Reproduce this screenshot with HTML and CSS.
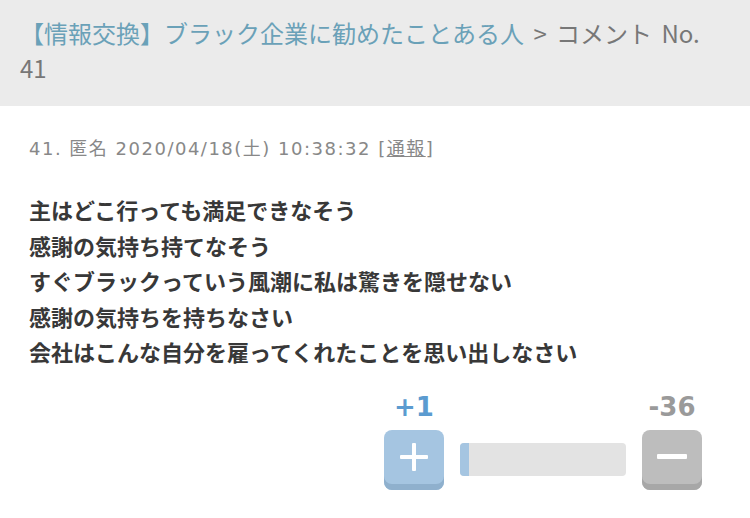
FILE: index.html
```html
<!DOCTYPE html>
<html lang="ja">
<head>
<meta charset="utf-8">
<title>コメント No. 41</title>
<link rel="stylesheet" href="styles.css">
</head>
<body>
<header class="crumb">
  <a class="crumb-link" href="#">【情報交換】ブラック企業に勧めたことある人</a><span class="crumb-rest"> &gt; コメント No. 41</span>
</header>
<main class="comment">
  <div class="meta">41. 匿名 2020/04/18(土) 10:38:32 [<a class="report" href="#">通報</a>]</div>
  <div class="body">
    主はどこ行っても満足できなそう<br>
    感謝の気持ち持てなそう<br>
    すぐブラックっていう風潮に私は驚きを隠せない<br>
    感謝の気持ちを持ちなさい<br>
    会社はこんな自分を雇ってくれたことを思い出しなさい
  </div>
  <div class="vote">
    <div class="count count-plus">+1</div>
    <div></div>
    <div class="count count-minus">-36</div>
    <button class="btn btn-plus" aria-label="plus">
      <svg width="28" height="28" viewBox="0 0 28 28"><rect x="12" y="0" width="4" height="28" rx="1" fill="#fff"/><rect x="0" y="12" width="28" height="4" rx="1" fill="#fff"/></svg>
    </button>
    <div class="bar"><div class="bar-fill" style="width:9px"></div></div>
    <button class="btn btn-minus" aria-label="minus">
      <svg width="30" height="6" viewBox="0 0 30 6"><rect x="0" y="0" width="30" height="5" rx="1" fill="#fff"/></svg>
    </button>
  </div>
</main>
</body>
</html>
```
FILE: styles.css
```css
html, body {
  margin: 0;
  padding: 0;
  background: #fff;
}
body {
  font-family: "Noto Sans CJK JP", "Noto Sans", sans-serif;
  width: 750px;
  height: 518px;
  overflow: hidden;
}
.crumb {
  background: #ebebeb;
  padding: 15px 36px 21px 20px;
  font-size: 24px;
  line-height: 35px;
  color: #777;
}
.crumb-link {
  color: #6aa1b8;
  text-decoration: none;
}
.crumb-rest {
  word-spacing: 4px;
}
.comment {
  padding: 30px 29px 0;
}
.meta {
  font-family: "DejaVu Sans", "Noto Sans CJK JP", sans-serif;
  font-size: 18px;
  line-height: 26px;
  color: #888;
  letter-spacing: 1.5px;
}
.report {
  color: #888;
  text-decoration: underline;
}
.body {
  margin-top: 30px;
  font-size: 22px;
  font-weight: 700;
  line-height: 35.5px;
  color: #383838;
}
.vote {
  display: grid;
  grid-template-columns: 60px 166px 60px;
  column-gap: 16px;
  row-gap: 9px;
  justify-content: end;
  padding-right: 19px;
  margin-top: 23px;
}
.count {
  font-family: "DejaVu Sans", sans-serif;
  font-weight: 700;
  font-size: 26px;
  line-height: 28px;
  text-align: center;
  white-space: nowrap;
}
.count-plus { color: #5b9bd0; }
.count-minus { color: #9a9a9a; }
.btn {
  width: 60px;
  height: 60px;
  border: 0;
  padding: 0 0 6px;
  border-radius: 8px;
  display: flex;
  align-items: center;
  justify-content: center;
}
.btn-plus {
  background: #a5c5e1;
  box-shadow: inset 0 -6px 0 #8fb0cd;
}
.btn-minus {
  background: #bdbdbd;
  box-shadow: inset 0 -6px 0 #a7a7a7;
}
.bar {
  margin-top: 13px;
  height: 33px;
  background: #e3e3e3;
  border-radius: 4px;
  overflow: hidden;
  display: flex;
}
.bar-fill {
  background: #a5c5e1;
  height: 100%;
}
```
